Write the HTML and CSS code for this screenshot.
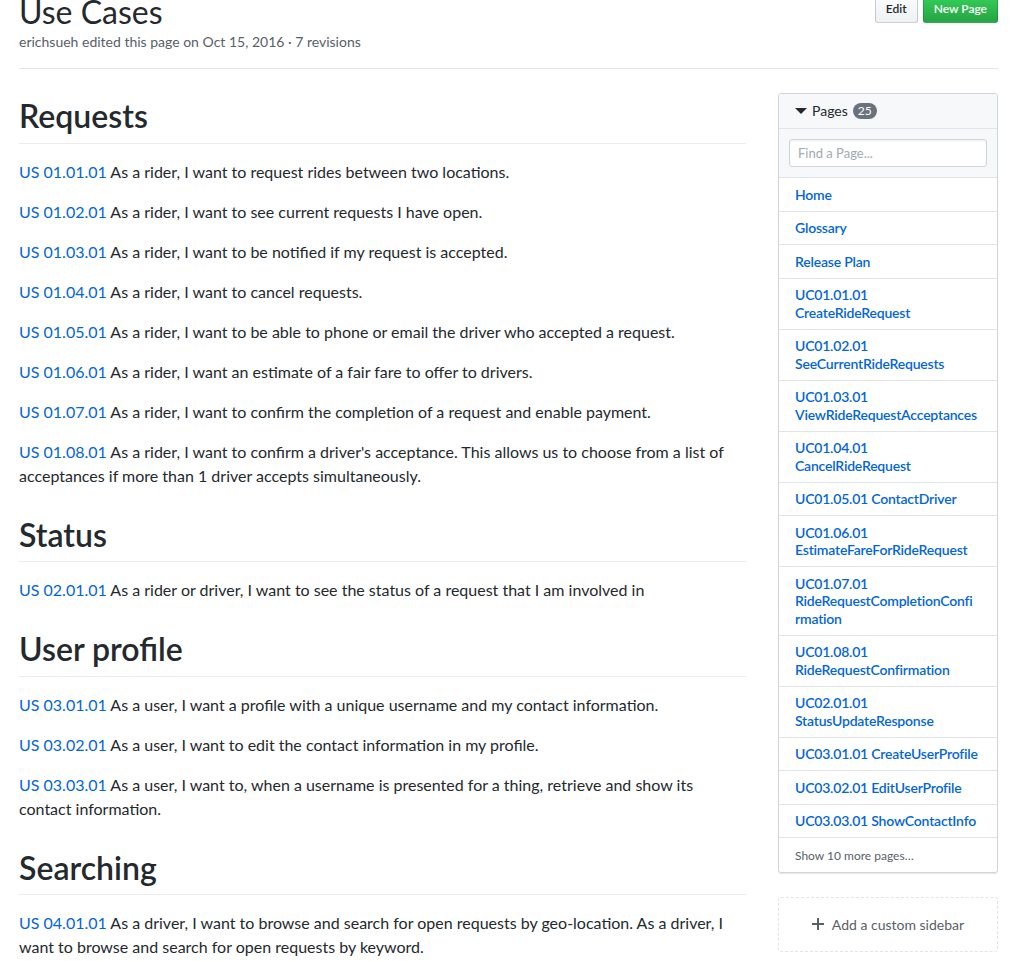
FILE: index.html
```html
<!DOCTYPE html>
<html lang="en">
<head>
<meta charset="utf-8">
<title>Use Cases</title>
<link rel="stylesheet" href="styles.css">
</head>
<body>
<div class="page">
  <header class="wiki-header">
    <div class="title-block">
      <h1 class="title">Use Cases</h1>
      <div class="meta">erichsueh edited this page on Oct 15, 2016 · 7 revisions</div>
    </div>
    <div class="actions">
      <a class="btn" href="#">Edit</a>
      <a class="btn btn-primary" href="#">New Page</a>
    </div>
  </header>

  <div class="layout">
    <article class="markdown">
      <h2>Requests</h2>
      <p><a href="#">US 01.01.01</a> As a rider, I want to request rides between two locations.</p>
      <p><a href="#">US 01.02.01</a> As a rider, I want to see current requests I have open.</p>
      <p><a href="#">US 01.03.01</a> As a rider, I want to be notified if my request is accepted.</p>
      <p><a href="#">US 01.04.01</a> As a rider, I want to cancel requests.</p>
      <p><a href="#">US 01.05.01</a> As a rider, I want to be able to phone or email the driver who accepted a request.</p>
      <p><a href="#">US 01.06.01</a> As a rider, I want an estimate of a fair fare to offer to drivers.</p>
      <p><a href="#">US 01.07.01</a> As a rider, I want to confirm the completion of a request and enable payment.</p>
      <p><a href="#">US 01.08.01</a> As a rider, I want to confirm a driver's acceptance. This allows us to choose from a list of<br>acceptances if more than 1 driver accepts simultaneously.</p>

      <h2>Status</h2>
      <p><a href="#">US 02.01.01</a> As a rider or driver, I want to see the status of a request that I am involved in</p>

      <h2>User profile</h2>
      <p><a href="#">US 03.01.01</a> As a user, I want a profile with a unique username and my contact information.</p>
      <p><a href="#">US 03.02.01</a> As a user, I want to edit the contact information in my profile.</p>
      <p><a href="#">US 03.03.01</a> As a user, I want to, when a username is presented for a thing, retrieve and show its<br>contact information.</p>

      <h2>Searching</h2>
      <p><a href="#">US 04.01.01</a> As a driver, I want to browse and search for open requests by geo-location. As a driver, I<br>want to browse and search for open requests by keyword.</p>
    </article>

    <aside class="sidebar">
      <div class="pages-box">
        <div class="pages-head">
          <svg class="caret" width="12" height="16" viewBox="0 0 12 16" aria-hidden="true"><path d="M0 5l6 6 6-6H0z"/></svg>
          <span class="pages-label">Pages</span>
          <span class="counter">25</span>
        </div>
        <div class="pages-filter">
          <input class="filter-input" type="text" placeholder="Find a Page...">
        </div>
        <ul class="pages-list">
          <li><a href="#">Home</a></li>
          <li><a href="#">Glossary</a></li>
          <li><a href="#">Release Plan</a></li>
          <li><a href="#">UC01.01.01<br>CreateRideRequest</a></li>
          <li><a href="#">UC01.02.01<br>SeeCurrentRideRequests</a></li>
          <li><a href="#">UC01.03.01<br>ViewRideRequestAcceptances</a></li>
          <li><a href="#">UC01.04.01<br>CancelRideRequest</a></li>
          <li><a href="#">UC01.05.01 ContactDriver</a></li>
          <li><a href="#">UC01.06.01<br>EstimateFareForRideRequest</a></li>
          <li><a href="#">UC01.07.01<br>RideRequestCompletionConfi<br>rmation</a></li>
          <li><a href="#">UC01.08.01<br>RideRequestConfirmation</a></li>
          <li><a href="#">UC02.01.01<br>StatusUpdateResponse</a></li>
          <li><a href="#">UC03.01.01 CreateUserProfile</a></li>
          <li><a href="#">UC03.02.01 EditUserProfile</a></li>
          <li><a href="#">UC03.03.01 ShowContactInfo</a></li>
          <li class="more"><a href="#">Show 10 more pages…</a></li>
        </ul>
      </div>

      <a class="custom-sidebar" href="#">
        <svg class="plus" width="12" height="16" viewBox="0 0 12 16" aria-hidden="true"><path d="M12 9H7v5H5V9H0V7h5V2h2v5h5v2z"/></svg>
        <span>Add a custom sidebar</span>
      </a>
    </aside>
  </div>
</div>
</body>
</html>
```

FILE: styles.css
```css
* { box-sizing: border-box; }

html, body {
  margin: 0;
  background: #fff;
}

body {
  font-family: Lato, "Open Sans", "Liberation Sans", sans-serif;
  font-size: 14px;
  line-height: 1.5;
  color: #24292e;
  overflow: hidden;
}

a {
  color: #0366d6;
  text-decoration: none;
}

.page {
  padding: 0 19px;
  margin-top: -8px;
}

/* Header */
.wiki-header {
  display: flex;
  justify-content: space-between;
  align-items: flex-start;
  padding-bottom: 16px;
  border-bottom: 1px solid #e1e4e8;
}

.title {
  margin: 0;
  padding-top: 3px;
  font-size: 32px;
  font-weight: 400;
  line-height: 33px;
}

.meta {
  margin-top: 3px;
  font-size: 14px;
  line-height: 21px;
  color: #586069;
}

.actions {
  display: flex;
  gap: 5px;
  margin-top: 3px;
}

.btn {
  display: inline-block;
  padding: 3px 10px;
  font-size: 12px;
  font-weight: 600;
  line-height: 20px;
  color: #24292e;
  background-color: #eff3f6;
  background-image: linear-gradient(-180deg, #fafbfc 0%, #eff3f6 90%);
  border: 1px solid rgba(27, 31, 35, 0.2);
  border-radius: 3px;
}

.btn-primary {
  color: #fff;
  background-color: #28a745;
  background-image: linear-gradient(-180deg, #34d058 0%, #28a745 90%);
}

/* Layout */
.layout {
  display: grid;
  grid-template-columns: 1fr 220px;
  gap: 32px;
  margin-top: 24px;
  align-items: start;
}

/* Markdown */
.markdown {
  font-size: 16px;
  line-height: 1.5;
}

.markdown h2 {
  margin: 24px 0 16px;
  padding-top: 5px;
  padding-bottom: 0.3em;
  font-size: 32px;
  font-weight: 600;
  line-height: 35px;
  border-bottom: 1px solid #eaecef;
}

.markdown h2:first-child {
  margin-top: 0;
}

.markdown p {
  margin: 0 0 16px;
}

/* Sidebar */
.pages-box {
  border: 1px solid #d1d5da;
  border-radius: 3px;
  box-shadow: 0 1px 1px rgba(27, 31, 35, 0.1);
  overflow: hidden;
}

.pages-head {
  display: flex;
  align-items: center;
  gap: 5px;
  padding: 0 16px;
  height: 35px;
  background: #f6f8fa;
  font-size: 14px;
  line-height: 18px;
  border-bottom: 1px solid #e1e4e8;
}

.caret {
  fill: #24292e;
  flex: none;
}

.counter {
  display: inline-block;
  padding: 0 5px;
  font-size: 12px;
  line-height: 16px;
  color: #fff;
  background: #6a737d;
  border-radius: 20px;
}

.pages-filter {
  padding: 10px;
  background: #f6f8fa;
}

.filter-input {
  display: block;
  width: 100%;
  height: 28px;
  padding: 3px 8px;
  font-family: inherit;
  font-size: 13px;
  color: #24292e;
  background: #fff;
  border: 1px solid #d1d5da;
  border-radius: 3px;
  box-shadow: inset 0 1px 2px rgba(27, 31, 35, 0.075);
  outline: none;
}

.filter-input::placeholder {
  color: #a3aab1;
}

.pages-list {
  list-style: none;
  margin: 0;
  padding: 0;
}

.pages-list li {
  padding: 7.5px 16px;
  border-top: 1px solid #e1e4e8;
  font-size: 14px;
  line-height: 17.5px;
  white-space: nowrap;
}

.pages-list li a {
  font-weight: 600;
  letter-spacing: -0.2px;
}

.pages-list li.more a {
  font-size: 12px;
  font-weight: 400;
  letter-spacing: 0;
  color: #586069;
}

.custom-sidebar {
  display: flex;
  align-items: center;
  justify-content: center;
  gap: 8px;
  margin-top: 24px;
  height: 55px;
  color: #586069;
  font-size: 14px;
  border: 1px dashed #e1e4e8;
  border-radius: 3px;
}

.plus {
  fill: #586069;
  flex: none;
}
```
